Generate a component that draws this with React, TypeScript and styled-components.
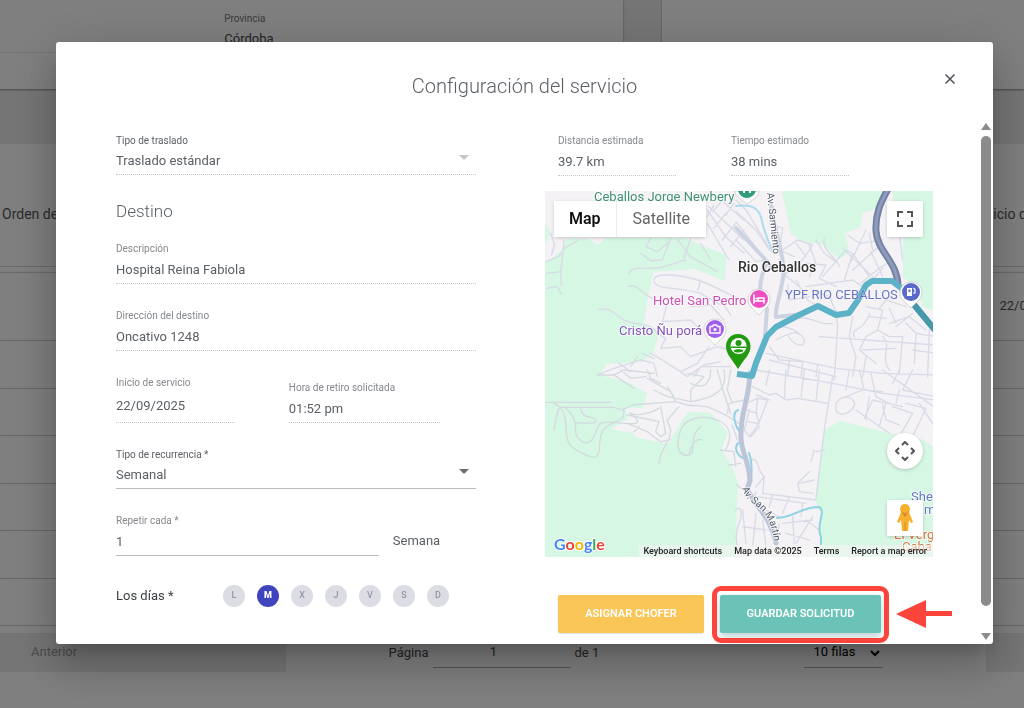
import React, { useState } from "react";
import styled, { createGlobalStyle, css } from "styled-components";

const GlobalStyle = createGlobalStyle`
  *, *::before, *::after { box-sizing: border-box; }
  html, body { margin: 0; height: 100%; }
  body {
    background: #fff;
    color: #5b6066;
    font: 400 13px/16px Roboto, "Liberation Sans", sans-serif;
    overflow: hidden;
  }
  button, input, select { font: inherit; color: inherit; margin: 0; }
`;

/* ---------- page behind the dialog ---------- */

const Page = styled.main`
  background: #fff;
  min-height: 100vh;
  overflow: hidden;
`;

const Cards = styled.section`
  display: grid;
  grid-template-columns: 623fr 362fr;
  column-gap: 39px;
  background: #ebebeb;
  padding-bottom: 55px;
`;

const Card = styled.div`
  height: 89px;
  background: #fff;
  box-shadow: 0 1px 2px rgba(0, 0, 0, 0.4);
`;

const CardRow = styled.div`
  height: 53px;
  padding: 13px 0 0 36%;
  border-bottom: 1px dotted #d4d4d4;
`;

const CardLabel = styled.span`
  display: block;
  font-size: 10px;
  line-height: 12px;
  color: #777;
`;

const CardValue = styled.span`
  display: block;
  line-height: 28px;
  color: #484848;
`;

const TableCard = styled.section`
  overflow: hidden;
`;

const Table = styled.table`
  width: calc(100% + 66px);
  table-layout: fixed;
  border-collapse: collapse;
  text-align: center;
  color: #555;
`;

const HeadCell = styled.th<{ $w?: number; $start?: boolean }>`
  height: 122px;
  padding: 18px 2px 0;
  width: ${(p) => (p.$w ? `${p.$w}px` : "auto")};
  text-align: ${(p) => (p.$start ? "left" : "center")};
  font-weight: 400;
  font-size: 14px;
  white-space: nowrap;
  border-bottom: 1px solid #d2d2d2;
`;

const GapCell = styled.td`
  height: 6px;
  padding: 0;
  border-bottom: 1px solid #d2d2d2;
`;

const BodyRow = styled.tr`
  height: 48px;
  &:nth-child(odd) { height: 47px; }
  &:first-child { height: 68px; }
`;

const BodyCell = styled.td`
  padding: 0;
  border-bottom: 1px solid #ccc;
`;

const Pager = styled.nav`
  display: flex;
  margin-top: 7px;
  height: 39px;
  color: #484848;
`;

const PagerButton = styled.button<{ $w: number }>`
  width: ${(p) => p.$w}px;
  padding: 0 0 0 31px;
  text-align: left;
  border: 0;
  background: #ebebeb;
  color: #999;
`;

const PagerCenter = styled.div`
  flex: 1;
  display: flex;
  justify-content: space-around;
`;

const PageJump = styled.label`
  display: flex;
  gap: 4px;
  line-height: 40px;
`;

const PageInput = styled.input`
  width: 138px;
  height: 35px;
  padding: 4px 16px 0 0;
  border: 0;
  border-bottom: 1px solid #aaa;
  background: none;
  text-align: center;
`;

const RowsPicker = styled.label`
  position: relative;
  display: block;
  width: 79px;
  height: 35px;
  border-bottom: 1px solid #aaa;
  color: #000;
`;

const RowsSelect = styled.select`
  appearance: none;
  width: 100%;
  height: 34px;
  padding: 4px 9px 0;
  border: 0;
  background: none;
`;

const RowsChevron = styled.svg`
  position: absolute;
  right: 3px;
  top: 17px;
`;

/* ---------- dialog ---------- */

const Overlay = styled.div`
  position: fixed;
  inset: 0;
  padding: 42px 31px 0 56px;
  background: rgba(0, 0, 0, 0.5);
`;

const Dialog = styled.section`
  background: #fff;
  border-radius: 3px;
  box-shadow: 0 11px 15px -7px rgba(0, 0, 0, 0.2), 0 24px 38px 3px rgba(0, 0, 0, 0.14),
    0 9px 46px 8px rgba(0, 0, 0, 0.12);
`;

const DialogHeader = styled.header`
  display: grid;
  grid-template-columns: 24px 1fr 24px;
  padding: 24px 31px 16px;
`;

const Title = styled.h1`
  grid-column: 2;
  margin: 0;
  text-align: center;
  font-size: 20px;
  font-weight: 300;
  line-height: 40px;
`;

const CloseButton = styled.button`
  display: grid;
  place-items: center;
  width: 24px;
  height: 26px;
  padding: 0;
  border: 0;
  background: none;
`;

const DialogBody = styled.div`
  display: flex;
  padding-right: 2px;
`;

const Columns = styled.div`
  flex: 1;
  display: grid;
  grid-template-columns: minmax(0, 360fr) minmax(0, 388fr);
  column-gap: 69px;
  padding: 13px 48px 0 60px;
`;

const ScrollTrack = styled.div`
  display: flex;
  flex-direction: column;
  align-items: center;
  width: 10px;
  padding: 1px 0 4px;
  color: #8b8b8b;
`;

const ScrollThumb = styled.div`
  flex: 1;
  width: 10px;
  margin: 6px 0 27px;
  border-radius: 5px;
  background: currentColor;
`;

const Form = styled.form`
  display: flex;
  flex-direction: column;
  gap: 26px;
`;

const FieldGroup = styled.div`
  display: flex;
  flex-direction: column;
`;

const SectionTitle = styled.h2`
  margin: 24px 0 20px;
  font-size: 17px;
  font-weight: 300;
  line-height: 24px;
`;

const FieldBox = styled.div<{ $w?: string }>`
  position: relative;
  display: flex;
  flex-direction: column;
  width: ${(p) => p.$w ?? "100%"};
`;

const Label = styled.label<{ $dark?: boolean }>`
  font-size: 10px;
  line-height: 12px;
  white-space: nowrap;
  color: ${(p) => (p.$dark ? "#5b6066" : "#85888d")};
`;

const line = css<{ $dotted?: boolean }>`
  border: 0;
  border-bottom: 1px ${(p) => (p.$dotted ? "dotted #c6c8ca" : "solid #b8babd")};
  border-radius: 0;
  background: none;
  outline: none;
  opacity: 1;
  color: #5b6066;
  width: 100%;
`;

const Input = styled.input<{ $dotted?: boolean; $tall?: boolean }>`
  ${line}
  height: ${(p) => (p.$tall ? 34 : 29)}px;
  padding: 0;
`;

const Select = styled.select<{ $dotted?: boolean }>`
  ${line}
  appearance: none;
  height: 28px;
  padding: 0;
`;

const Caret = styled.svg<{ $muted?: boolean }>`
  position: absolute;
  right: 7px;
  bottom: 15px;
  color: ${(p) => (p.$muted ? "#c4c6c8" : "#6c7075")};
`;

const Pair = styled.div<{ $gap: number }>`
  display: flex;
  align-items: flex-end;
  gap: ${(p) => p.$gap}px;
`;

const Unit = styled.span`
  line-height: 30px;
`;

const DaysRow = styled.div`
  display: flex;
  align-items: center;
  height: 28px;
`;

const DaysLabel = styled.span`
  width: 107px;
  color: #3c4043;
`;

const Days = styled.div`
  display: flex;
  gap: 12px;
`;

const Day = styled.button<{ $on: boolean }>`
  width: 22px;
  height: 22px;
  padding: 0 0 2px;
  border: 0;
  border-radius: 50%;
  font-size: 9px;
  font-weight: ${(p) => (p.$on ? 900 : 500)};
  line-height: 20px;
  color: ${(p) => (p.$on ? "#fff" : "#94979f")};
  background: ${(p) => (p.$on ? "#3f45bd" : "#dcdde4")};
`;

const Side = styled.div`
  display: flex;
  flex-direction: column;
`;

const SideRow = styled.div<{ $gap: number }>`
  display: flex;
  gap: ${(p) => p.$gap}px;
  padding-left: 13px;
`;

const ActionButton = styled.button<{ $tone: string; $w: number }>`
  width: ${(p) => p.$w}px;
  height: 38px;
  padding: 0;
  border: 0;
  border-radius: 2px;
  background: ${(p) => p.$tone};
  color: #fff;
  font-size: 11px;
  font-weight: 600;
  box-shadow: 0 1px 2px rgba(0, 0, 0, 0.12);
`;

const Actions = styled(SideRow)`
  margin: 38px 0 11px;
`;

const Highlighted = styled.div`
  position: relative;
  button { box-shadow: 0 4px 8px rgba(60, 120, 130, 0.35); }
`;

const Ring = styled.span`
  position: absolute;
  inset: -9px -8px -10px;
  border: 5px solid #fb443c;
  border-radius: 9px;
  pointer-events: none;
`;

const Arrow = styled.svg`
  position: absolute;
  left: calc(100% + 15px);
  top: 5px;
`;

/* ---------- map ---------- */

const MapBox = styled.div`
  position: relative;
  height: 366px;
  margin-top: 15px;
  overflow: hidden;
  background: #f3f1f5;
`;

const MapSvg = styled.svg`
  display: block;
  width: 100%;
  height: 100%;
`;

const mapCard = css`
  border: 0;
  background: #fff;
  box-shadow: 0 1px 4px -1px rgba(0, 0, 0, 0.3);
`;

const MapTypes = styled.div`
  ${mapCard}
  position: absolute;
  left: 9px;
  top: 10px;
  display: flex;
`;

const MapType = styled.button<{ $active?: boolean }>`
  height: 36px;
  padding: 0 ${(p) => (p.$active ? 15 : 16)}px;
  border: 0;
  border-right: ${(p) => (p.$active ? "1px solid #ececec" : "0")};
  background: none;
  font-size: 16px;
  font-weight: ${(p) => (p.$active ? 600 : 400)};
  color: ${(p) => (p.$active ? "#111" : "#666")};
`;

const MapControl = styled.button<{ $bottom?: number; $round?: boolean }>`
  ${mapCard}
  position: absolute;
  right: 10px;
  ${(p) => (p.$bottom === undefined ? "top: 10px;" : `bottom: ${p.$bottom}px;`)}
  display: grid;
  place-items: center;
  width: 36px;
  height: 36px;
  padding: 0;
  border-radius: ${(p) => (p.$round ? "50%" : "1px")};
  color: #555;
`;

const Brand = styled.a`
  position: absolute;
  left: 9px;
  bottom: 3px;
  font: 700 16px/20px Lato, Roboto, sans-serif;
  text-decoration: none;
  -webkit-text-stroke: 2px #fff;
  paint-order: stroke fill;
`;

const BrandLetter = styled.span<{ $c: string }>`
  color: ${(p) => p.$c};
`;

const Attribution = styled.div`
  position: absolute;
  right: 0;
  bottom: 0;
  display: flex;
  gap: 12px;
  padding: 0 6px 0 5px;
  font-size: 9px;
  line-height: 12px;
  font-weight: 500;
  color: #222;
  background: rgba(245, 245, 245, 0.6);
  a { color: inherit; text-decoration: none; }
`;

function MapDrawing() {
  return (
    <MapSvg viewBox="0 0 388 366" preserveAspectRatio="xMidYMid slice" aria-hidden="true">
      <rect width="388" height="366" fill="#f4f2f5" />
      {/* woodland */}
      <g fill="#d5f7e3">
        <path d="M0 32L6 42 0 54ZM0 72L16 60 22 48H43L53 54 61 47 139 47 156 54 181 64 180 90 150 78 108 81 103 106 99 132 114 142 108 162 96 171 62 173 54 184 83 191 102 202 98 217 80 217 83 228 66 238 88 242 90 246 123 253 133 236 143 221 166 222 183 242 176 259 186 272 193 292 190 366H0Z" />
        <path d="M237 0L241 19 246 43 258 50 278 54 294 68 304 62 300 42 315 36 318 22 328 19 342 0Z" />
        <path d="M347 0L352 30 358 45 358 86 371 96 378 116 388 119V0Z" />
        <path d="M296 230L279 239 276 265 271 312 276 322 274 366H388V256L378 249 344 242Z" />
      </g>
      {/* minor streets, north west quarter */}
      <g transform="translate(-1 -1) scale(.3333)" fill="none" stroke="#d8dbe6" strokeWidth="4" strokeLinejoin="round" strokeLinecap="round">
        <path d="M5 215L45 200 60 175 100 152M20 130L32 165 22 195M60 150L50 250 52 285M5 250L50 245M8 295L40 290 52 312M255 250C265 225 310 240 350 232S400 215 425 210M320 145L305 170 340 185 375 155M380 145L355 210 320 212 290 190M400 148L440 200 520 245M440 145L420 205M470 160L500 210M255 290C280 280 290 310 325 325M165 358C215 350 220 395 270 400S320 410 345 430M330 270C330 245 410 255 460 270S560 320 600 330M330 275C340 300 400 290 470 310L530 345M470 270L462 300M370 340L355 395 440 390 470 420M440 350L500 345 540 390M530 330L560 375M340 430L365 445 350 475M350 475L410 470 440 500 520 470 560 480M320 490L355 510 410 545 460 520 495 470M410 545L430 560 480 525 530 515M160 555L210 535 290 510 330 520 340 560M225 520L260 545M295 490L330 505M280 500L260 530M450 560L470 530 560 530" />
        <path d="M490 60L545 140 600 190M495 50L600 150M520 20L600 90M490 100L555 210M510 45L490 80M545 70L510 115M575 100L535 150M600 120L560 170M540 25L510 60M570 40L545 75" />
      </g>
      {/* north east quarter */}
      <g transform="translate(191 -1) scale(.3333)" fill="none" stroke="#d8dbe6" strokeWidth="4" strokeLinejoin="round" strokeLinecap="round">
        <path d="M0 65L60 120 100 180M0 95L85 205M0 150L60 215 90 210M0 30L30 60 110 190M100 100L140 115 130 180 175 200M140 180L185 150 230 165 200 210 160 235M180 160L210 200M220 165L240 220 220 260M240 150L265 190 300 215M265 145C255 180 300 200 310 230M150 250L210 220 270 225 250 265 300 290M260 260L330 180 350 190 325 270M335 135L370 160 440 150M350 190L400 260M350 240L440 160M320 175L420 270M390 120L345 215M405 185L440 260M375 280L430 235 470 210M400 130L410 180M440 235L410 270M490 130L500 210" />
        <path d="M155 285L160 330 220 320M180 270L215 330 240 345M230 300L280 320 300 365M140 250L190 290M210 290L350 270 380 290M115 415C140 400 180 420 200 440M155 435C175 420 205 435 205 455S170 465 155 435M120 450L150 435M100 470L130 510 200 515M170 390C220 370 250 410 290 400M250 440L600 465M90 490L300 535 440 550 600 555M100 510L300 560M300 370L305 410 295 570M350 380L340 440 360 500 350 560M355 440C345 415 375 420 385 400S400 390 400 370M390 350L440 360 425 420 460 440 500 440M430 355L450 330 510 350M425 420L390 440 370 480 420 520M440 440C470 470 430 500 460 540M480 410L530 370M510 400L540 430 535 520M460 400L520 380 570 420M500 440L490 550M400 380L450 385M460 355L480 400M540 430L600 440M580 420L575 560M380 480L480 475M390 500L380 560M530 480L600 490M160 510L155 560M200 515L195 560M245 525L240 560" />
      </g>
      {/* south west quarter */}
      <g transform="translate(-1 179) scale(.3333)" fill="none" stroke="#d3dae0" strokeWidth="4" strokeLinejoin="round" strokeLinecap="round">
        <path d="M5 97H200M30 100L50 112H210L235 120 265 105 395 95 430 105 490 110 545 135M30 180C38 140 38 120 50 110M50 115C80 150 50 210 90 235S160 275 165 245 160 180 205 160 235 145 240 115M65 115C95 140 95 165 95 185S130 240 150 200 150 150 240 160 240 120 260 130 320 130 345 115M110 115C115 150 145 135 155 150S110 158 95 158M250 135L345 155 335 185 350 200 365 190 350 110M250 160L310 185 350 215 375 210 380 180 370 150 405 110M270 185L285 170M370 215L350 255 345 280M410 180C390 240 410 260 435 255S430 200 470 170M410 180C420 150 470 130 520 150S560 210 545 240M435 255C440 230 455 200 475 210" />
        <path d="M310 25L380 65 395 95M330 60L370 80 440 95M370 50L390 80M160 15L210 15 270 55M210 15L240 0 330 10M230 0L260 25 305 20M310 0L320 25 350 40M440 95V60L480 20 430 10M440 40C480 60 500 40 500 0M540 0C550 50 530 80 440 95M520 0L540 70 560 130M560 0L550 60 565 100M545 135L600 170M530 240L570 245 575 290M550 130L555 100 600 90M555 285L590 280M580 345L590 355M575 420C595 400 595 440 585 460S575 510 580 530M565 165L580 210" />
      </g>
      {/* south east quarter */}
      <g transform="translate(191 179) scale(.3333)" fill="none" stroke="#d8dbe6" strokeWidth="4" strokeLinejoin="round" strokeLinecap="round">
        <path d="M60 0L290 40 440 70 600 90M50 50L100 75 120 70 150 90 185 85 215 90 275 100M60 75L100 90M100 0L90 45M150 0L145 85M205 0L195 80M250 0L240 95M290 20L265 180 240 385M340 0L330 60M370 0L385 60 440 65M405 10L420 80 460 100M440 0L600 115M490 0L470 40M530 0L500 60 600 80M300 100C320 70 350 80 355 100S310 150 300 120ZM330 80L380 60M360 120L460 190M385 145L410 90 450 100 430 170M440 105L450 150 490 165M470 110L530 130 490 200M510 100L570 115 530 200M550 100L590 160 600 180M400 80L390 150M455 100L500 110M490 60L480 100" />
        <path d="M30 100L65 85 60 130 70 160 40 200 25 180 40 120M65 85L95 90 70 155M30 120L65 130M35 155L65 160M45 200L70 170M45 270C70 260 60 300 85 320L60 350M85 320L80 370 240 390M60 365L50 400M110 375L100 410M190 340L235 330M220 305L185 340 190 365 230 370M235 240L225 275M240 245L265 240M50 400L130 440M60 380L210 400M160 380L140 430M200 400L195 440M230 440L180 520M140 460L230 450M170 440L175 520M130 460L120 540M20 420L30 520M60 430L50 530M80 450L90 530M210 450L250 480M20 470L90 480M150 490L220 510" />
      </g>
      {/* creeks */}
      <g fill="none" stroke="#8ed3e6" strokeWidth="2" strokeLinecap="round">
        <path d="M191 15C205 13 214 15 217 30S224 52 228 60" strokeOpacity=".7" />
        <path d="M193 219C186 222 190 236 196 242M193 252C188 258 194 268 202 268M204 262C207 270 207 280 206 290" />
        <path d="M232 327C250 326 256 316 274 316 282 320 270 334 276 346V353" />
      </g>
      {/* avenues */}
      <g fill="none" stroke="#ccd2e0" strokeLinejoin="round" strokeLinecap="round">
        <path d="M191 37L218 66 226 76M239 80C237 100 229 120 231 126L250 124" strokeWidth="4" />
        <path d="M226 14C230 40 238 60 239 82M222 70C214 90 212 104 222 118L220 144" strokeWidth="4" />
        <path d="M205 182C204 210 195 222 196 246 196 262 204 268 205 290L202 298C212 318 226 326 231 352" stroke="#bcc6d8" strokeWidth="5" />
      </g>
      {/* highway */}
      <g fill="none">
        <path d="M343 -2C338 8 330 20 331 40S352 70 353 94" stroke="#7482a6" strokeWidth="7" />
        <path d="M343 -2C338 8 330 20 331 40S352 70 353 94" stroke="#8f9cbc" strokeWidth="3" />
      </g>
      {/* route */}
      <path d="M192 183L207 185 211 172 222 145 231 136 252 125 273 115 291 124 304 122 313 109 321 94 327 90H347L356 97 370 115 390 139" fill="none" stroke="#5cb2c7" strokeWidth="6" strokeLinejoin="round" />
      <path d="M366 110L390 139" fill="none" stroke="#4799aa" strokeWidth="6" />

      {/* pins */}
      <g>
        <path d="M190 0H214C214 6 207 9 202 13C197 9 190 6 190 0Z" fill="#fff" stroke="#bbb" strokeWidth=".6" />
        <circle cx="202" cy="-2" r="9" fill="#2f9e76" />
        <path d="M199 2V-4H205V2" fill="none" stroke="#fff" strokeWidth="2" />
      </g>
      <g>
        <path d="M214 98C207 98 203 103 203 108.500C203 116 209 118 214 124C219 118 225 116 225 108.500C225 103 221 98 214 98Z" fill="#fff" stroke="#bbb" strokeWidth=".6" />
        <circle cx="214" cy="108" r="9" fill="#ee50c4" />
        <path d="M209 104V112M209 110H219V112M219 110V107H213V110M211 107.500H211.500" fill="none" stroke="#fff" strokeWidth="1.600" strokeLinecap="round" strokeLinejoin="round" />
      </g>
      <g>
        <path d="M170 128C163 128 159 133 159 138.500C159 146 165 148 170 154C175 148 181 146 181 138.500C181 133 177 128 170 128Z" fill="#fff" stroke="#bbb" strokeWidth=".6" />
        <circle cx="170" cy="138" r="9" fill="#a05eee" />
        <path d="M165 135.500H167.500L168.500 134H171.500L172.500 135.500H175V142H165Z" fill="none" stroke="#fff" strokeWidth="1.400" strokeLinejoin="round" />
        <circle cx="170" cy="138.500" r="1.600" fill="#fff" />
      </g>
      <g>
        <path d="M366 91C359 91 355 96 355 101.500C355 109 361 111 366 117C371 111 377 109 377 101.500C377 96 373 91 366 91Z" fill="#fff" stroke="#bbb" strokeWidth=".6" />
        <circle cx="366" cy="101" r="9" fill="#5a6acb" />
        <path d="M362 97H367V105H362Z" fill="#fff" />
        <path d="M368 102H370V98.500L368.500 97" fill="none" stroke="#fff" strokeWidth="1.200" />
        <path d="M363.500 98.500H365.500V101H363.500Z" fill="#5a6acb" />
      </g>

      {/* place names */}
      <g fontFamily="Roboto, 'Liberation Sans', sans-serif" fontSize="13" stroke="#fff" strokeWidth="2" strokeOpacity=".7" strokeLinejoin="round" style={{ paintOrder: "stroke" }}>
        <text x="49" y="10" fill="#3f9273">Ceballos Jorge Newbery</text>
        <text x="193" y="81" fontSize="14" fontWeight="500" fill="#333">Rio Ceballos</text>
        <text x="108" y="114" fill="#cd4fb4">Hotel San Pedro</text>
        <text x="74" y="144" fill="#8450bd">Cristo Ñu porá</text>
        <text x="240" y="108" fill="#6877c4" strokeWidth="1" strokeOpacity=".4">YPF RIO CEBALLOS</text>
        <text x="366" y="310" fill="#6877c4">She</text>
        <text x="379" y="323" fill="#6877c4">m</text>
        <text x="349" y="348" fill="#d5763c">El Verg</text>
        <text x="357" y="360" fill="#d5763c">Cabal</text>
        <text transform="translate(222 2) rotate(84)" fontSize="10" fill="#555a66">Av. Sarmiento</text>
        <path id="san-martin" d="M197 297C203 318 226 312 229 352" fill="none" stroke="none" />
        <text fontSize="10" fill="#555a66">
          <textPath href="#san-martin">Av. San Martín</textPath>
        </text>
      </g>

      {/* destination marker */}
      <path d="M193 143C185.500 143 181 149 181 155.500C181 164 188 169 193 178C198 169 205.500 164 205.500 155.500C205.500 149 200.500 143 193 143Z" fill="#219a0f" />
      <circle cx="193.500" cy="155" r="8" fill="#fff" />
      <circle cx="193.500" cy="152" r="3" fill="#219a0f" />
      <path d="M186 155.500H201V157H186ZM188.500 160C189 157.500 198 157.500 198.500 160 196 162 191 162 188.500 160Z" fill="#219a0f" />
    </MapSvg>
  );
}

const brand: [string, string][] = [
  ["G", "#4285f4"],
  ["o", "#ea4335"],
  ["o", "#f4b400"],
  ["g", "#4285f4"],
  ["l", "#34a853"],
  ["e", "#ea4335"],
];

function RouteMap() {
  return (
    <MapBox>
      <MapDrawing />
      <MapTypes>
        <MapType type="button" $active>Map</MapType>
        <MapType type="button">Satellite</MapType>
      </MapTypes>
      <MapControl type="button" aria-label="Toggle fullscreen view">
        <svg width="18" height="18" viewBox="0 0 18 18" fill="none" stroke="currentColor" strokeWidth="2">
          <path d="M2 7V2H7M11 2H16V7M16 11V16H11M7 16H2V11" />
        </svg>
      </MapControl>
      <MapControl type="button" $round $bottom={88} aria-label="Map camera controls">
        <svg width="20" height="20" viewBox="0 0 20 20" fill="none" stroke="currentColor" strokeWidth="2">
          <path d="M7 4L10 1 13 4M7 16L10 19 13 16M4 7L1 10 4 13M16 7L19 10 16 13" />
        </svg>
      </MapControl>
      <MapControl type="button" $bottom={21} aria-label="Street View Pegman">
        <svg width="18" height="30" viewBox="0 0 18 30">
          <path d="M5 9L1 19 3 20 5 17 6 28H12L13 17 15 20 17 19 13 9Z" fill="#f5b12d" />
          <path d="M6 10L9 14 12 10Z" fill="#d9822b" />
          <path d="M9 19V28" stroke="#d9902b" />
          <circle cx="9" cy="6" r="5" fill="#f5b12d" />
          <path d="M5 8C7 11 11 11 13 8" fill="none" stroke="#d9902b" />
        </svg>
      </MapControl>
      <Brand href="#google" aria-label="Google">
        {brand.map(([ch, c], i) => (
          <BrandLetter key={i} $c={c}>{ch}</BrandLetter>
        ))}
      </Brand>
      <Attribution>
        <a href="#shortcuts">Keyboard shortcuts</a>
        <span>Map data ©2025</span>
        <a href="#terms">Terms</a>
        <a href="#report">Report a map error</a>
      </Attribution>
    </MapBox>
  );
}

type FieldProps = { id: string; label: string; value: string; w?: string; dotted?: boolean; tall?: boolean };

function TextField({ id, label, value, w, dotted = true, tall }: FieldProps) {
  return (
    <FieldBox $w={w}>
      <Label htmlFor={id}>{label}</Label>
      <Input id={id} defaultValue={value} readOnly={dotted} $dotted={dotted} $tall={tall} />
    </FieldBox>
  );
}

function SelectField({ id, label, value, dotted }: FieldProps) {
  return (
    <FieldBox>
      <Label htmlFor={id} $dark>{label}</Label>
      <Select id={id} disabled={dotted} $dotted={dotted}>
        <option>{value}</option>
      </Select>
      <Caret $muted={dotted} width="10" height="5" viewBox="0 0 10 5" aria-hidden="true">
        <path d="M0 0H10L5 5Z" fill="currentColor" />
      </Caret>
    </FieldBox>
  );
}

const weekdays = ["L", "M", "X", "J", "V", "S", "D"];

export default function App() {
  const [selected, setSelected] = useState<string[]>(["M"]);
  const toggle = (d: string) =>
    setSelected((s) => (s.includes(d) ? s.filter((x) => x !== d) : [...s, d]));

  return (
    <>
      <GlobalStyle />
      <Page>
        <Cards>
          <Card>
            <CardRow>
              <CardLabel>Provincia</CardLabel>
              <CardValue>Córdoba</CardValue>
            </CardRow>
          </Card>
          <Card />
        </Cards>
        <TableCard>
          <Table>
            <thead>
              <tr>
                <HeadCell $start>Orden de</HeadCell>
                <HeadCell $w={112}>Inicio de servicio</HeadCell>
              </tr>
              <tr>
                <GapCell colSpan={2} />
              </tr>
            </thead>
            <tbody>
              {Array.from({ length: 7 }, (_, i) => (
                <BodyRow key={i}>
                  <BodyCell />
                  <BodyCell>{i === 0 ? "22/09/2025" : null}</BodyCell>
                </BodyRow>
              ))}
            </tbody>
          </Table>
        </TableCard>
        <Pager>
          <PagerButton type="button" $w={286}>Anterior</PagerButton>
          <PagerCenter>
            <PageJump>
              Página
              <PageInput defaultValue="1" />
              de 1
            </PageJump>
            <RowsPicker>
              <RowsSelect aria-label="Filas">
                <option>10 filas</option>
              </RowsSelect>
              <RowsChevron width="10" height="7" viewBox="0 0 10 7" fill="none" stroke="#000" strokeWidth="2">
                <path d="M1 1L5 5 9 1" />
              </RowsChevron>
            </RowsPicker>
          </PagerCenter>
          <PagerButton type="button" $w={38} aria-label="Siguiente" />
        </Pager>
      </Page>

      <Overlay>
        <Dialog role="dialog" aria-modal="true" aria-labelledby="dialog-title">
          <DialogHeader>
            <Title id="dialog-title">Configuración del servicio</Title>
            <CloseButton type="button" aria-label="Cerrar">
              <svg width="10" height="10" viewBox="0 0 10 10" fill="none" stroke="#4d5258" strokeWidth="1.500">
                <path d="M.5.5L9.500 9.500M9.500.5L.5 9.500" />
              </svg>
            </CloseButton>
          </DialogHeader>
          <DialogBody>
            <Columns>
              <Form>
                <FieldGroup>
                  <SelectField id="tipo" label="Tipo de traslado" value="Traslado estándar" dotted />
                  <SectionTitle>Destino</SectionTitle>
                  <TextField id="descripcion" label="Descripción" value="Hospital Reina Fabiola" />
                </FieldGroup>
                <TextField id="direccion" label="Dirección del destino" value="Oncativo 1248" />
                <Pair $gap={54}>
                  <TextField id="inicio" label="Inicio de servicio" value="22/09/2025" w="33%" tall />
                  <TextField id="hora" label="Hora de retiro solicitada" value="01:52 pm" w="42%" />
                </Pair>
                <SelectField id="recurrencia" label="Tipo de recurrencia *" value="Semanal" />
                <Pair $gap={14}>
                  <TextField id="repetir" label="Repetir cada *" value="1" w="73%" dotted={false} />
                  <Unit>Semana</Unit>
                </Pair>
                <DaysRow>
                  <DaysLabel id="dias">Los días *</DaysLabel>
                  <Days role="group" aria-labelledby="dias">
                    {weekdays.map((d) => (
                      <Day
                        key={d}
                        type="button"
                        $on={selected.includes(d)}
                        aria-pressed={selected.includes(d)}
                        onClick={() => toggle(d)}
                      >
                        {d}
                      </Day>
                    ))}
                  </Days>
                </DaysRow>
              </Form>
              <Side>
                <SideRow $gap={55}>
                  <TextField id="distancia" label="Distancia estimada" value="39.7 km" w="118px" />
                  <TextField id="tiempo" label="Tiempo estimado" value="38 mins" w="118px" />
                </SideRow>
                <RouteMap />
                <Actions $gap={16}>
                  <ActionButton type="button" $tone="#f8c556" $w={146}>ASIGNAR CHOFER</ActionButton>
                  <Highlighted>
                    <ActionButton type="submit" $tone="#6ac3b6" $w={161}>GUARDAR SOLICITUD</ActionButton>
                    <Ring />
                    <Arrow width="56" height="28" viewBox="0 0 56 28" aria-hidden="true">
                      <path d="M0 14L30 0V11H56V16H30V28Z" fill="#fb443c" />
                    </Arrow>
                  </Highlighted>
                </Actions>
              </Side>
            </Columns>
            <ScrollTrack aria-hidden="true">
              <svg width="10" height="7" viewBox="0 0 10 7"><path d="M0 7L5 0 10 7Z" fill="currentColor" /></svg>
              <ScrollThumb />
              <svg width="10" height="7" viewBox="0 0 10 7"><path d="M0 0H10L5 7Z" fill="currentColor" /></svg>
            </ScrollTrack>
          </DialogBody>
        </Dialog>
      </Overlay>
    </>
  );
}
